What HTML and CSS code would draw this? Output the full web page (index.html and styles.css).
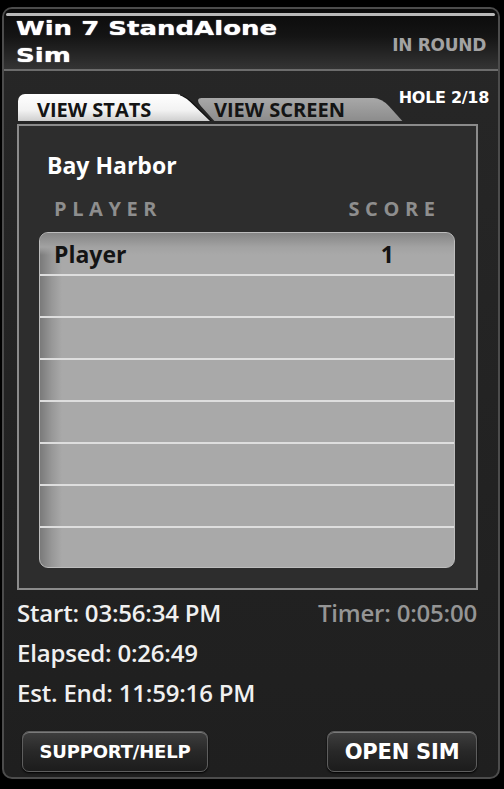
FILE: index.html
```html
<!DOCTYPE html>
<html>
<head>
<meta charset="utf-8">
<link rel="stylesheet" href="styles.css">
</head>
<body>
<div class="window">
  <div class="header">
    <div class="sheen"></div>
    <div class="header-row">
      <div class="title"><span>Win 7 StandAlone</span><span>Sim</span></div>
      <div class="status">IN ROUND</div>
    </div>
  </div>
  <div class="body">
    <div class="tabs-row">
      <div class="tabs">
        <div class="tab tab-active"><span>VIEW STATS</span></div>
        <div class="tab tab-inactive"><span>VIEW SCREEN</span></div>
      </div>
      <div class="hole">HOLE 2/18</div>
    </div>
    <div class="panel">
      <div class="course">Bay Harbor</div>
      <div class="cols"><span>PLAYER</span><span>SCORE</span></div>
      <div class="table">
        <div class="row first"><span class="pname">Player</span><span class="pscore">1</span></div>
        <div class="row"></div>
        <div class="row"></div>
        <div class="row"></div>
        <div class="row"></div>
        <div class="row"></div>
        <div class="row"></div>
        <div class="row last"></div>
      </div>
    </div>
    <div class="stats">
      <div class="stat-line"><span>Start: 03:56:34 PM</span><span class="timer">Timer: 0:05:00</span></div>
      <div class="stat-line"><span>Elapsed: 0:26:49</span></div>
      <div class="stat-line"><span>Est. End: 11:59:16 PM</span></div>
    </div>
    <div class="buttons">
      <div class="btn btn-help">SUPPORT/HELP</div>
      <div class="btn btn-open">OPEN SIM</div>
    </div>
  </div>
</div>
</body>
</html>
```
FILE: styles.css
```css
html, body {
  margin: 0;
  padding: 0;
  background: #000;
}
body {
  width: 504px;
  height: 789px;
  overflow: hidden;
  font-family: "Open Sans", "DejaVu Sans", sans-serif;
}
.window {
  margin: 7px 0 0 2px;
  width: 494px;
  height: 768px;
  border: 2px solid #4c4c4c;
  border-radius: 10px;
  background: linear-gradient(#272727, #1f1f1f);
  overflow: hidden;
  display: flex;
  flex-direction: column;
}
.header {
  height: 60px;
  background: linear-gradient(#0a0a0a 0%, #141414 45%, #343434 100%);
  border-bottom: 2px solid #6c6c6c;
  display: flex;
  flex-direction: column;
}
.sheen {
  height: 3px;
  margin: 4px 3px 0 2px;
  background: #b8b8b8;
  border-radius: 2px;
}
.header-row {
  display: flex;
  justify-content: space-between;
  align-items: center;
  padding: 0 12px 0 12px;
  flex: 1;
}
.title {
  display: flex;
  flex-direction: column;
  font-family: "DejaVu Sans", sans-serif;
  font-weight: bold;
  font-size: 20px;
  line-height: 27px;
  color: #fff;
  transform: scaleX(1.3);
  transform-origin: left center;
  margin-top: -2px;
  text-shadow: 0 0 1px #fff;
}
.status {
  font-family: "DejaVu Sans", sans-serif;
  color: #a3a3a3;
  font-size: 17px;
  font-weight: bold;
  margin-top: 4px;
  letter-spacing: -0.3px;
}
.body {
  flex: 1;
  display: flex;
  flex-direction: column;
  padding: 0 0 0 13px;
}
.tabs-row {
  display: flex;
  justify-content: space-between;
  align-items: flex-end;
  height: 53px;
  padding-right: 9px;
}
.tabs {
  display: flex;
  align-items: flex-end;
  margin-bottom: 3px;
  padding-left: 1px;
}
.tab {
  position: relative;
  font-weight: bold;
  font-size: 20px;
  line-height: 20px;
  color: #141414;
  box-sizing: border-box;
  white-space: nowrap;
}
.tab span { position: relative; }
.tab-active {
  z-index: 2;
  height: 27px;
  width: 162px;
  padding: 6px 0 0 19px;
  background: linear-gradient(#ffffff, #f2f2f2 60%, #cfcfcf);
  border-radius: 7px 0 0 0;
}
.tab-active::after {
  content: "";
  position: absolute;
  top: 0;
  right: -16px;
  width: 32px;
  height: 100%;
  transform: skewX(46deg);
  border-top-right-radius: 8px;
  background: linear-gradient(#ffffff, #f2f2f2 60%, #cfcfcf);
  box-shadow: 2px 0 0 #111;
  z-index: 0;
}
.tab-inactive {
  z-index: 1;
  height: 23px;
  width: 188px;
  margin-left: 24px;
  padding: 2px 0 0 10px;
}
.tab-inactive::before {
  content: "";
  position: absolute;
  inset: 0;
  transform: skewX(42deg);
  border-radius: 8px 8px 0 0;
  background: linear-gradient(#a8a8a8, #8c8c8c);
}
.hole {
  font-family: "DejaVu Sans", sans-serif;
  font-weight: bold;
  font-size: 16px;
  line-height: 20px;
  color: #fff;
  align-self: flex-start;
  margin-top: 17px;
  letter-spacing: -0.3px;
}
.panel {
  position: relative;
  z-index: 3;
  width: 461px;
  height: 466px;
  box-sizing: border-box;
  border: 2px solid #8b8b8b;
  background: #2d2d2d;
  padding: 25px 21px 0 20px;
  display: flex;
  flex-direction: column;
}
.course {
  font-weight: bold;
  font-size: 23px;
  color: #fff;
  padding-left: 8px;
  line-height: 28px;
}
.cols {
  display: flex;
  justify-content: space-between;
  padding: 0 20px 0 15px;
  margin-top: 18px;
  font-weight: bold;
  font-size: 20px;
  letter-spacing: 5.6px;
  color: #8e8e8e;
  line-height: 24px;
}
.cols span:last-child { margin-right: -5.6px; }
.table {
  margin-top: 11px;
  height: 336px;
  border-radius: 9px;
  background: linear-gradient(90deg, #7a7a7a 0, #989898 12px, #a9a9a9 22px, #a9a9a9 100%);
  border: 1px solid #bdbdbd;
  box-sizing: border-box;
  overflow: hidden;
  display: flex;
  flex-direction: column;
}
.row {
  height: 40px;
  border-bottom: 2px solid #dedede;
  flex: none;
}
.row.first {
  height: 43px;
  background: linear-gradient(#858585, #a2a2a2 14px, rgba(169,169,169,0) 22px);
  display: flex;
  justify-content: space-between;
  align-items: center;
  padding: 0 60px 0 14px;
  box-sizing: border-box;
}
.row.last {
  border-bottom: none;
  flex: 1;
}
.pname, .pscore {
  font-weight: bold;
  font-size: 23px;
  color: #141414;
}
.stats {
  padding: 3px 0 0 0;
  display: flex;
  flex-direction: column;
}
.stat-line {
  display: flex;
  justify-content: space-between;
  font-size: 24px;
  font-weight: 600;
  color: #f0f0f0;
  line-height: 40px;
  padding-right: 21px;
  letter-spacing: -0.2px;
}
.timer {
  color: #959595;
}
.buttons {
  display: flex;
  justify-content: space-between;
  padding: 18px 21px 0 5px;
}
.btn {
  height: 41px;
  box-sizing: border-box;
  border-radius: 7px;
  border: 1px solid #5e5e5e;
  background: linear-gradient(#3e3e3e, #282828 50%, #1c1c1c);
  box-shadow: inset 0 1px 0 #7a7a7a, 0 1px 2px #000;
  color: #fff;
  font-family: "DejaVu Sans", sans-serif;
  font-weight: bold;
  display: flex;
  align-items: center;
  justify-content: center;
}
.btn-help {
  width: 186px;
  font-size: 18px;
  letter-spacing: -0.2px;
}
.btn-open {
  width: 150px;
  font-size: 21px;
  letter-spacing: -0.2px;
}
```
